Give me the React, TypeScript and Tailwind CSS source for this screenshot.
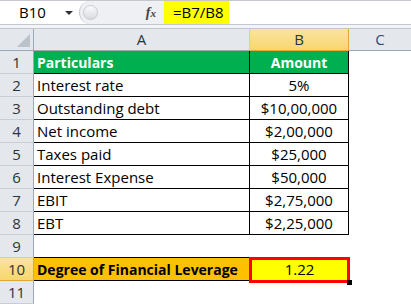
const rows: [string, string][] = [
  ["Interest rate", "5%"],
  ["Outstanding debt", "$10,00,000"],
  ["Net income", "$2,00,000"],
  ["Taxes paid", "$25,000"],
  ["Interest Expense", "$50,000"],
  ["EBIT", "$2,75,000"],
  ["EBT", "$2,25,000"],
];

const font = { fontFamily: "'Open Sans', Lato, sans-serif" };

function RowHead({ n, active = false }: { n: number; active?: boolean }) {
  return (
    <div
      className={`flex h-full w-[34px] shrink-0 items-center justify-center border-r border-b ${
        active
          ? "border-r-[#e3a735] border-b-[#e3a735] bg-gradient-to-b from-[#fce39f] to-[#f8d66f]"
          : "border-r-[#9ba8b6] border-b-[#c9ced6] bg-[#e4e7ec]"
      } text-[15px] text-[#2b3340]`}
    >
      {n}
    </div>
  );
}

export default function App() {
  return (
    <div className="flex h-[304px] w-[411px] flex-col overflow-hidden bg-white text-black text-[15px]" style={font}>
      {/* formula bar */}
      <div className="flex h-[25px] shrink-0 border-t border-b border-[#c3c8cf] bg-white">
        <div className="relative flex w-[79px] items-center pl-[19px]">
          B10
          <svg className="absolute left-[65px] top-[10px]" width="8" height="5" viewBox="0 0 8 5">
            <path d="M0 0h8L4 4z" fill="#333" />
          </svg>
        </div>
        <div className="flex w-[85px] items-center rounded-l-full border-l border-[#c4c8ce] bg-[#eef0f3]">
          <div className="ml-[3px] h-[15px] w-[15px] rounded-full border border-[#c7cbd1] bg-gradient-to-b from-[#fbfbfc] to-[#d7dbe0]" />
          <span
            className="ml-auto mr-[8px] text-[14px] italic font-bold text-[#444]"
            style={{ fontFamily: "'Liberation Serif', serif" }}
          >
            f<span className="text-[11px]">x</span>
          </span>
        </div>
        <div className="flex items-center bg-[#ffff00] pl-[9px] pr-[5px]">=B7/B8</div>
        <div className="flex-1" />
      </div>
      <div className="h-[3px] shrink-0 bg-[#f3f4f6]" />
      {/* column headers */}
      <div className="flex h-[23px] shrink-0 border-t border-[#c3c8cf] text-[#2b3340]">
        <div className="relative w-[34px] shrink-0 border-r border-b border-[#9ba8b6] bg-[#e4e7ec]">
          <svg className="absolute bottom-[3px] right-[3px]" width="13" height="13" viewBox="0 0 13 13">
            <path d="M13 0V13H0z" fill="#bcc2ca" />
          </svg>
        </div>
        <div className="flex w-[216px] shrink-0 items-center justify-center border-r border-b border-r-[#c9ced6] border-b-[#9ba8b6] bg-[#e4e7ec]">
          A
        </div>
        <div className="flex w-[99px] shrink-0 items-center justify-center border-r border-b border-[#e3a735] bg-gradient-to-b from-[#fce39f] to-[#f8d66f]">
          B
        </div>
        <div className="flex flex-1 items-center justify-center border-b border-[#9ba8b6] bg-[#e4e7ec] text-[#2f4c78]">
          C
        </div>
      </div>
      {/* row 1 */}
      <div className="flex h-[23px] shrink-0">
        <RowHead n={1} />
        <div className="flex w-[216px] shrink-0 items-center border-r border-b border-black bg-[#00b050] pl-[3px] text-[14px] font-bold text-white">
          Particulars
        </div>
        <div className="flex w-[99px] shrink-0 items-center justify-center border-r border-b border-black bg-[#00b050] text-[14px] font-bold text-white">
          Amount
        </div>
      </div>
      {rows.map(([label, value], i) => (
        <div key={label} className="flex h-[23px] shrink-0">
          <RowHead n={i + 2} />
          <div className="flex w-[216px] shrink-0 items-center border-r border-b border-black pl-[3px]">
            {label}
          </div>
          <div className="flex w-[99px] shrink-0 items-center justify-center border-r border-b border-black">
            {value}
          </div>
        </div>
      ))}
      {/* row 9 */}
      <div className="flex h-[23px] shrink-0">
        <RowHead n={9} />
      </div>
      {/* row 10 */}
      <div className="flex h-[23px] shrink-0">
        <RowHead n={10} active />
        <div className="-mt-px flex h-[24px] w-[216px] shrink-0 items-center border-t border-r border-b border-black bg-[#ffc000] pl-[3px] text-[14px] font-bold">
          Degree of Financial Leverage
        </div>
        <div className="relative flex w-[99px] shrink-0 items-center justify-center bg-[#ffff00]">
          1.22
          <div className="absolute -top-px -left-px -right-px -bottom-[2px] border-[3px] border-[#ff0000]" />
          <div className="absolute -right-[3px] -bottom-[4px] h-[5px] w-[5px] bg-black" />
        </div>
      </div>
      {/* row 11 */}
      <div className="flex h-[23px] shrink-0">
        <RowHead n={11} />
      </div>
    </div>
  );
}
